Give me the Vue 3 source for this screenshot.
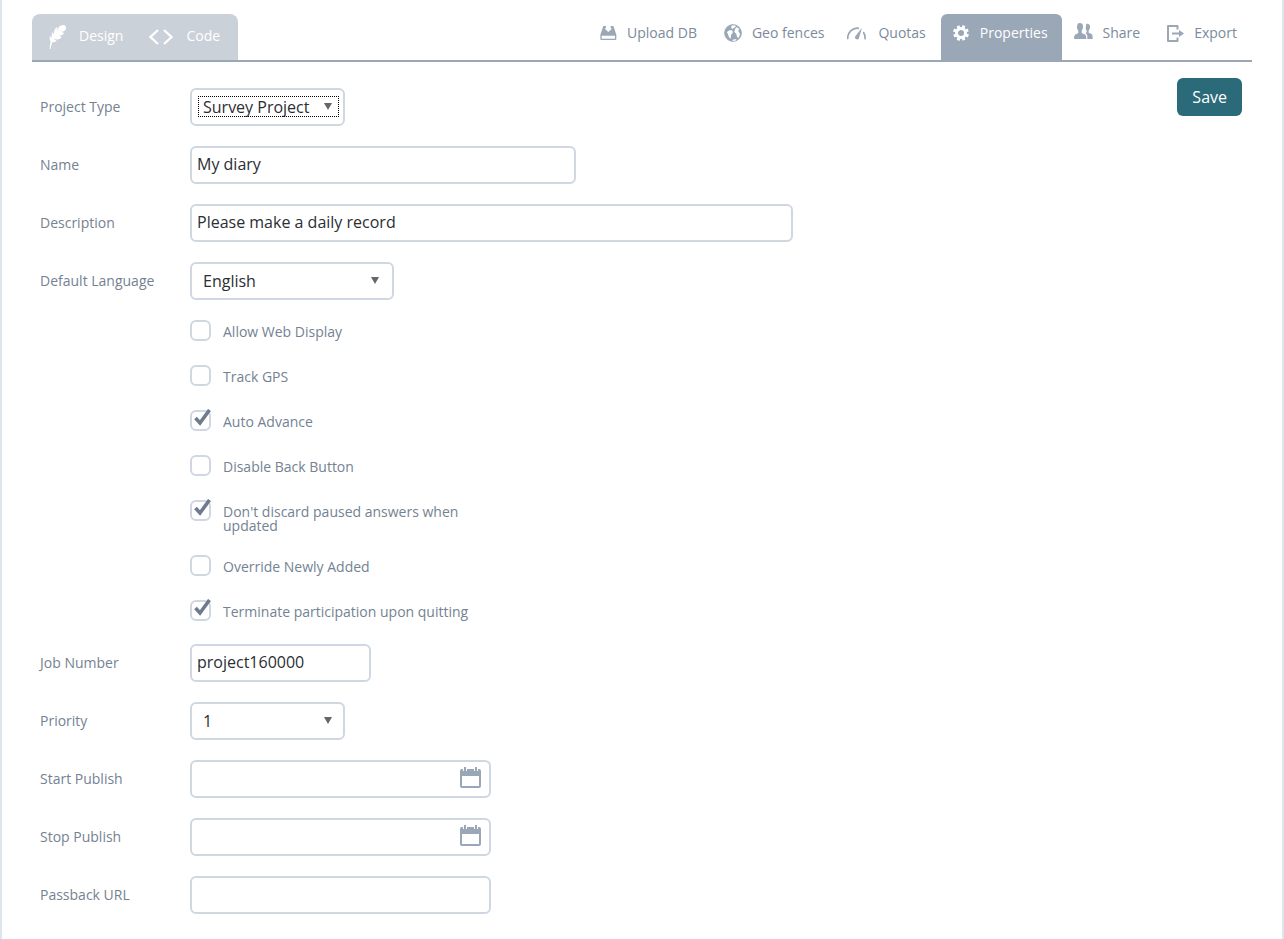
<script setup>
import { ref } from 'vue'

const project = ref({
  type: 'Survey Project',
  name: 'My diary',
  description: 'Please make a daily record',
  language: 'English',
  job: 'project160000',
  priority: '1',
  start: '',
  stop: '',
  passback: '',
})

const options = ref([
  { id: 'web', label: 'Allow Web Display', on: false },
  { id: 'gps', label: 'Track GPS', on: false },
  { id: 'advance', label: 'Auto Advance', on: true },
  { id: 'back', label: 'Disable Back Button', on: false },
  { id: 'paused', label: "Don't discard paused answers when updated", on: true },
  { id: 'override', label: 'Override Newly Added', on: false },
  { id: 'terminate', label: 'Terminate participation upon quitting', on: true },
])
</script>

<template>
  <div class="page">
    <header class="bar">
      <nav class="modes" aria-label="Editor mode">
        <a href="#design" class="mode design">
          <svg width="18" height="24" viewBox="0 0 54 72" fill="#fff" aria-hidden="true">
            <path d="M42 0C49 0 52 4 51 10C50 16 47 19 41 20L34 19L45 24C42 30 36 33 30 32L25 30L38 36C35 41 28 45 19 43L13 41L23 47C19 51 14 51 10 52C7 58 6 64 6 71L2 71C2 63 3 56 5 50C2 44 1 38 3 32L8 41C7 33 8 26 11 21L16 32C14 24 15 15 19 11C21 8 23 7 25 7L25 22C26 12 29 4 34 2Z" />
          </svg>
          <span>Design</span>
        </a>
        <a href="#code" class="mode code">
          <svg width="24" height="16" viewBox="0 0 24 16" fill="none" stroke="#fff" stroke-width="2.300" aria-hidden="true">
            <path d="M9 1L1.500 8L9 15M15 1L22.500 8L15 15" />
          </svg>
          <span>Code</span>
        </a>
      </nav>

      <nav class="tabs" aria-label="Project sections">
        <a href="#upload" class="tab">
          <svg width="17" height="15" viewBox="-1 0 51 45" fill="currentColor" aria-hidden="true">
            <path d="M9 0H17V4L14 9L24 18L34 9L31 4V0H39L48 26V39Q48 42 45 42H3Q0 42 0 39V26ZM4 29V38H44V29Z" fill-rule="evenodd" />
            <path d="M21 1H27V7H32L24 15L16 7H21Z" fill="#fff" />
          </svg>
          <span>Upload DB</span>
        </a>
        <a href="#fences" class="tab">
          <svg width="18" height="18" viewBox="0 0 54 54" aria-hidden="true">
            <circle cx="27" cy="27" r="25" fill="currentColor" stroke="currentColor" stroke-width="3" />
            <path d="M13 20L22 18L27 23L25 28L21 33L20 44L15 40L13 33L9 25Z" fill="#fff" />
            <path d="M22 5L32 4L36 8L30 11L26 15L22 12ZM37 10L43 12L46 17L42 20L47 27L48 32L43 42L39 39L37 29L31 24L33 16ZM26 47L38 45L34 50L26 51Z" fill="#fff" />
          </svg>
          <span>Geo fences</span>
        </a>
        <a href="#quotas" class="tab gauge">
          <svg width="19" height="13" viewBox="0 0 57 39" fill="none" stroke="currentColor" aria-hidden="true">
            <path d="M2 37C1 17 16 1 36 4M49 15C53 21 55 28 54 37" stroke-width="5" />
            <path d="M45 2L35 36Q29 39 24 34Q23 30 25 28Z" fill="currentColor" stroke="none" />
          </svg>
          <span>Quotas</span>
        </a>
        <a href="#properties" class="tab active" aria-current="page">
          <svg width="16" height="16" viewBox="0 0 16 16" aria-hidden="true">
            <circle cx="8" cy="8" r="4.500" fill="none" stroke="currentColor" stroke-width="3" />
            <path d="M8 0V3M8 13V16M0 8H3M13 8H16M2.500 2.500L4.500 4.500M11.500 11.500L13.500 13.500M2.500 13.500L4.500 11.500M11.500 4.500L13.500 2.500" stroke="currentColor" stroke-width="3" transform="rotate(22 8 8)" />
          </svg>
          <span>Properties</span>
        </a>
        <a href="#share" class="tab">
          <svg width="19" height="20" viewBox="0 0 57 60" fill="currentColor" aria-hidden="true">
            <path d="M37 3C44 1 49 6 48 13C48 18 46 20 44 23V29L54 34Q56 36 56 48H40V37L35 31L38 28V23C36 21 35 18 35 15Z" />
            <path d="M17 0C24 0 28 5 27 12C27 17 25 20 23 23V30L34 35Q37 37 37 48H0Q0 37 3 35L13 30V23C10 20 9 16 9 12C9 5 12 0 17 0Z" />
          </svg>
          <span>Share</span>
        </a>
        <a href="#export" class="tab">
          <svg width="17" height="17" viewBox="0 0 17 17" fill="none" stroke="currentColor" aria-hidden="true">
            <path d="M10.500 4.500V1H1V16H10.500V12.500" stroke-width="2" stroke-linejoin="round" />
            <path d="M5 8.500H13" stroke-width="2" />
            <path d="M12 5L17 8.500L12 12Z" fill="currentColor" stroke="none" />
          </svg>
          <span>Export</span>
        </a>
      </nav>
    </header>

    <main class="content">
      <form class="form" @submit.prevent>
        <div class="row">
          <label for="type">Project Type</label>
          <div class="select short">
            <select id="type" v-model="project.type" class="marked"><option>Survey Project</option></select>
            <svg class="arrow" width="8" height="7" viewBox="0 0 8 7" aria-hidden="true"><path d="M0 0H8L4 7Z" /></svg>
          </div>
        </div>
        <div class="row">
          <label for="name">Name</label>
          <input id="name" v-model="project.name" class="field name" type="text" />
        </div>
        <div class="row">
          <label for="description">Description</label>
          <input id="description" v-model="project.description" class="field description" type="text" />
        </div>
        <div class="row">
          <label for="language">Default Language</label>
          <div class="select medium">
            <select id="language" v-model="project.language"><option>English</option></select>
            <svg class="arrow" width="8" height="7" viewBox="0 0 8 7" aria-hidden="true"><path d="M0 0H8L4 7Z" /></svg>
          </div>
        </div>

        <div class="checks">
          <div v-for="o in options" :key="o.id" class="check">
            <span class="box">
              <input :id="o.id" v-model="o.on" type="checkbox" />
              <svg v-if="o.on" class="tick" width="17" height="17" viewBox="0 0 17 17" fill="none" stroke="#6d7b8d" aria-hidden="true">
                <path d="M1.500 9L6 14L15.500 1" stroke-width="3.600" />
              </svg>
            </span>
            <label :for="o.id">{{ o.label }}</label>
          </div>
        </div>

        <div class="row">
          <label for="job">Job Number</label>
          <input id="job" v-model="project.job" class="field job" type="text" />
        </div>
        <div class="row">
          <label for="priority">Priority</label>
          <div class="select short">
            <select id="priority" v-model="project.priority"><option>1</option></select>
            <svg class="arrow" width="8" height="7" viewBox="0 0 8 7" aria-hidden="true"><path d="M0 0H8L4 7Z" /></svg>
          </div>
        </div>
        <div v-for="d in [{ id: 'start', label: 'Start Publish' }, { id: 'stop', label: 'Stop Publish' }]" :key="d.id" class="row">
          <label :for="d.id">{{ d.label }}</label>
          <div class="date">
            <input :id="d.id" v-model="project[d.id]" class="field" type="text" />
            <button type="button" class="calendar" :aria-label="'Choose date for ' + d.label">
              <svg width="21" height="21" viewBox="0 0 21 21" aria-hidden="true">
                <path d="M2 2H19Q21 2 21 4V19Q21 21 19 21H2Q0 21 0 19V4Q0 2 2 2ZM2 9V19H19V9Z" fill="#9aa7b7" fill-rule="evenodd" />
                <path d="M3 0H7V4H3ZM14 0H18V4H14Z" fill="#fff" />
                <path d="M5 0V4M16 0V4" stroke="#9aa7b7" stroke-width="2" />
              </svg>
            </button>
          </div>
        </div>
        <div class="row">
          <label for="passback">Passback URL</label>
          <input id="passback" v-model="project.passback" class="field url" type="text" />
        </div>
      </form>
      <button type="button" class="save">Save</button>
    </main>
  </div>
</template>

<style>
body {
  background: #fff;
}
</style>

<style scoped>
.page {
  box-sizing: border-box;
  min-height: 100vh;
  padding: 14px 30px 25px;
  border: solid #dce6ef;
  border-width: 0 2px;
  color: #748292;
  font: 14px/18px "Open Sans", "Noto Sans", sans-serif;
}
.bar {
  display: flex;
  justify-content: space-between;
  border-bottom: 2px solid #9aa7b7;
}
.modes,
.tabs {
  display: flex;
  height: 46px;
}
.modes {
  border-radius: 8px 8px 0 0;
  background: #cbd1d9;
}
.mode,
.tab {
  display: flex;
  align-items: center;
  box-sizing: border-box;
  text-decoration: none;
  white-space: nowrap;
}
.mode {
  color: #fff;
  padding-right: 18px;
}
.mode span {
  padding-bottom: 3px;
}
.mode svg {
  flex: none;
}
.design {
  padding-left: 17px;
  gap: 12px;
}
.code {
  padding-left: 8px;
  gap: 13px;
}
.tab {
  padding: 0 15px 8px 12px;
  color: #7b8a9c;
}
.tab svg {
  flex: none;
  color: #9aa7b7;
}
.tab span {
  flex: 1;
  text-align: right;
  padding-left: 10px;
}
.gauge {
  padding-left: 8px;
}
.gauge span {
  padding-left: 12px;
}
.tab.active {
  border-radius: 6px 6px 0 0;
  background: #9aa7b7;
  color: #fff;
  padding-right: 14px;
}
.tab.active svg {
  color: #fff;
}
.tab.active span {
  padding-left: 11px;
}
.content {
  display: flex;
  justify-content: space-between;
  align-items: flex-start;
  padding: 16px 10px 0 8px;
}
.form {
  flex: 1;
  display: flex;
  flex-direction: column;
  gap: 20px;
  padding-top: 10px;
}
.row {
  display: grid;
  grid-template-columns: 150px 1fr;
  align-items: center;
}
.field,
.select {
  box-sizing: border-box;
  width: 100%;
  height: 38px;
  border: 2px solid #ced7e2;
  border-radius: 6px;
  background: #fff;
}
.field,
.select select {
  color: #2b2e33;
  font: 16px/20px "Open Sans", "Noto Sans", sans-serif;
}
.field {
  padding: 0 5px 2px;
}
.name {
  max-width: 386px;
}
.description {
  max-width: 603px;
}
.job {
  max-width: 181px;
}
.date,
.url {
  max-width: 301px;
}
.short {
  max-width: 155px;
}
.medium {
  max-width: 204px;
}
.select {
  position: relative;
  padding: 6px 4px 7px 6px;
}
.select select {
  display: block;
  appearance: none;
  width: 100%;
  height: 21px;
  padding: 0 20px 0 5px;
  border: 0;
  background: transparent;
}
.select .marked {
  outline: 1px dotted #000;
  outline-offset: -1px;
}
.arrow {
  position: absolute;
  top: 13px;
  right: 11px;
  fill: #666;
  pointer-events: none;
}
.medium .arrow {
  right: 13px;
}
.date {
  position: relative;
}
.date .field {
  display: block;
  padding-right: 36px;
}
.calendar {
  position: absolute;
  top: 7px;
  right: 10px;
  padding: 0;
  border: 0;
  background: none;
}
.calendar svg {
  display: block;
}
.checks {
  display: flex;
  flex-direction: column;
  gap: 21px;
  margin-left: 150px;
  max-width: 300px;
}
.check {
  display: flex;
  gap: 12px;
  min-height: 24px;
}
.check label {
  padding: 5px 0 1px;
  line-height: 14px;
}
.box {
  position: relative;
  flex: none;
  width: 21px;
  height: 21px;
}
.box input {
  display: block;
  appearance: none;
  box-sizing: border-box;
  width: 21px;
  height: 21px;
  margin: 0;
  border: 2px solid #ced7e2;
  border-radius: 6px;
  background: #fff;
}
.tick {
  position: absolute;
  top: -1px;
  right: 0;
  pointer-events: none;
}
.save {
  flex: none;
  height: 38px;
  padding: 0 15px;
  border: 0;
  border-radius: 6px;
  background: #2b6a78;
  color: #fff;
  font: 16px/20px "Open Sans", "Noto Sans", sans-serif;
}
</style>
